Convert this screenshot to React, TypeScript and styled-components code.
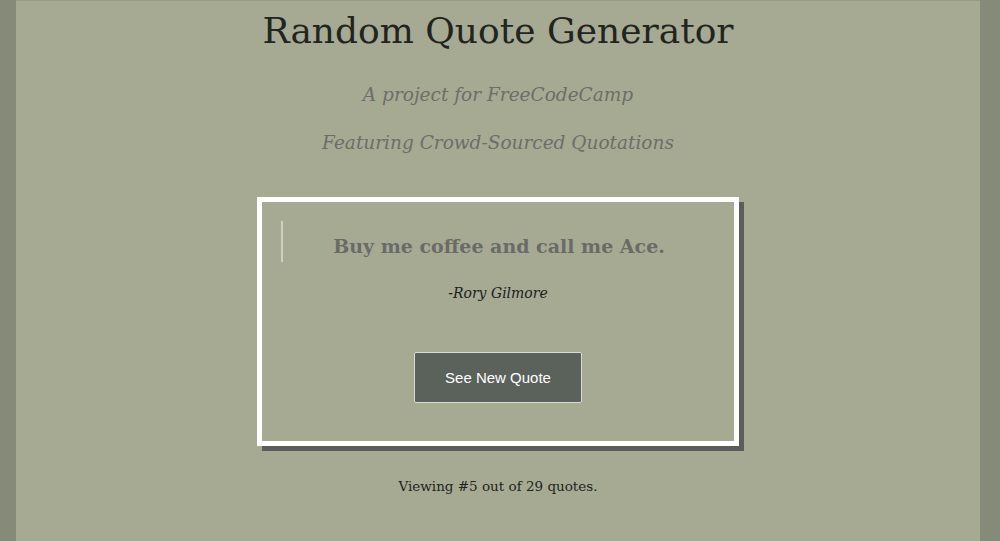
import React from "react";
import styled, { createGlobalStyle } from "styled-components";

const Global = createGlobalStyle`
  html, body { margin: 0; padding: 0; }
  body {
    background: #868a79;
    font-family: "DejaVu Serif", Georgia, serif;
  }
`;

const Page = styled.div`
  margin: 0 20px 0 16px;
  min-height: 541px;
  background: #a6aa93;
  border-top: 1px solid #989c86;
  box-sizing: border-box;
  display: flex;
  flex-direction: column;
  align-items: center;
  text-align: center;
`;

const Title = styled.h1`
  margin: 8px 0 0;
  font-weight: normal;
  font-size: 36px;
  line-height: 44px;
  color: #222420;
`;

const Subtitle = styled.h3<{ $top: number }>`
  margin: ${(p) => p.$top}px 0 0;
  font-weight: normal;
  font-style: italic;
  font-size: 18.5px;
  line-height: 26px;
  color: #6c6e69;
`;

const Card = styled.div`
  margin-top: 41px;
  width: 482px;
  height: 249px;
  box-sizing: border-box;
  border: 5px solid #ffffff;
  box-shadow: 5px 5px 0 #5a5d58;
  padding: 19px 19px 0 19px;
  display: flex;
  flex-direction: column;
  align-items: center;
`;

const Quote = styled.blockquote`
  margin: 0;
  align-self: stretch;
  border-left: 2px solid #cdd0c2;
  height: 41px;
  box-sizing: border-box;
  padding-top: 8px;
  display: flex;
  align-items: center;
  justify-content: center;
  font-weight: bold;
  font-size: 19px;
  color: #6a6b68;
`;

const Author = styled.p`
  margin: 19px 0 0;
  font-style: italic;
  font-size: 14px;
  line-height: 24px;
  color: #1f201d;
`;

const Button = styled.button`
  margin-top: 47px;
  width: 168px;
  height: 51px;
  background: #5b625c;
  border: 1px solid #d9dbd3;
  border-radius: 2px;
  color: #ffffff;
  font-family: "Liberation Sans", Arial, sans-serif;
  font-size: 15px;
  cursor: pointer;
`;

const Footer = styled.p`
  margin: 28px 0 0;
  font-size: 13.5px;
  line-height: 24px;
  color: #222420;
`;

export default function App() {
  return (
    <>
      <Global />
      <Page>
        <Title>Random Quote Generator</Title>
        <Subtitle $top={29}>A project for FreeCodeCamp</Subtitle>
        <Subtitle $top={22}>Featuring Crowd-Sourced Quotations</Subtitle>
        <Card>
          <Quote>Buy me coffee and call me Ace.</Quote>
          <Author>-Rory Gilmore</Author>
          <Button>See New Quote</Button>
        </Card>
        <Footer>Viewing #5 out of 29 quotes.</Footer>
      </Page>
    </>
  );
}
